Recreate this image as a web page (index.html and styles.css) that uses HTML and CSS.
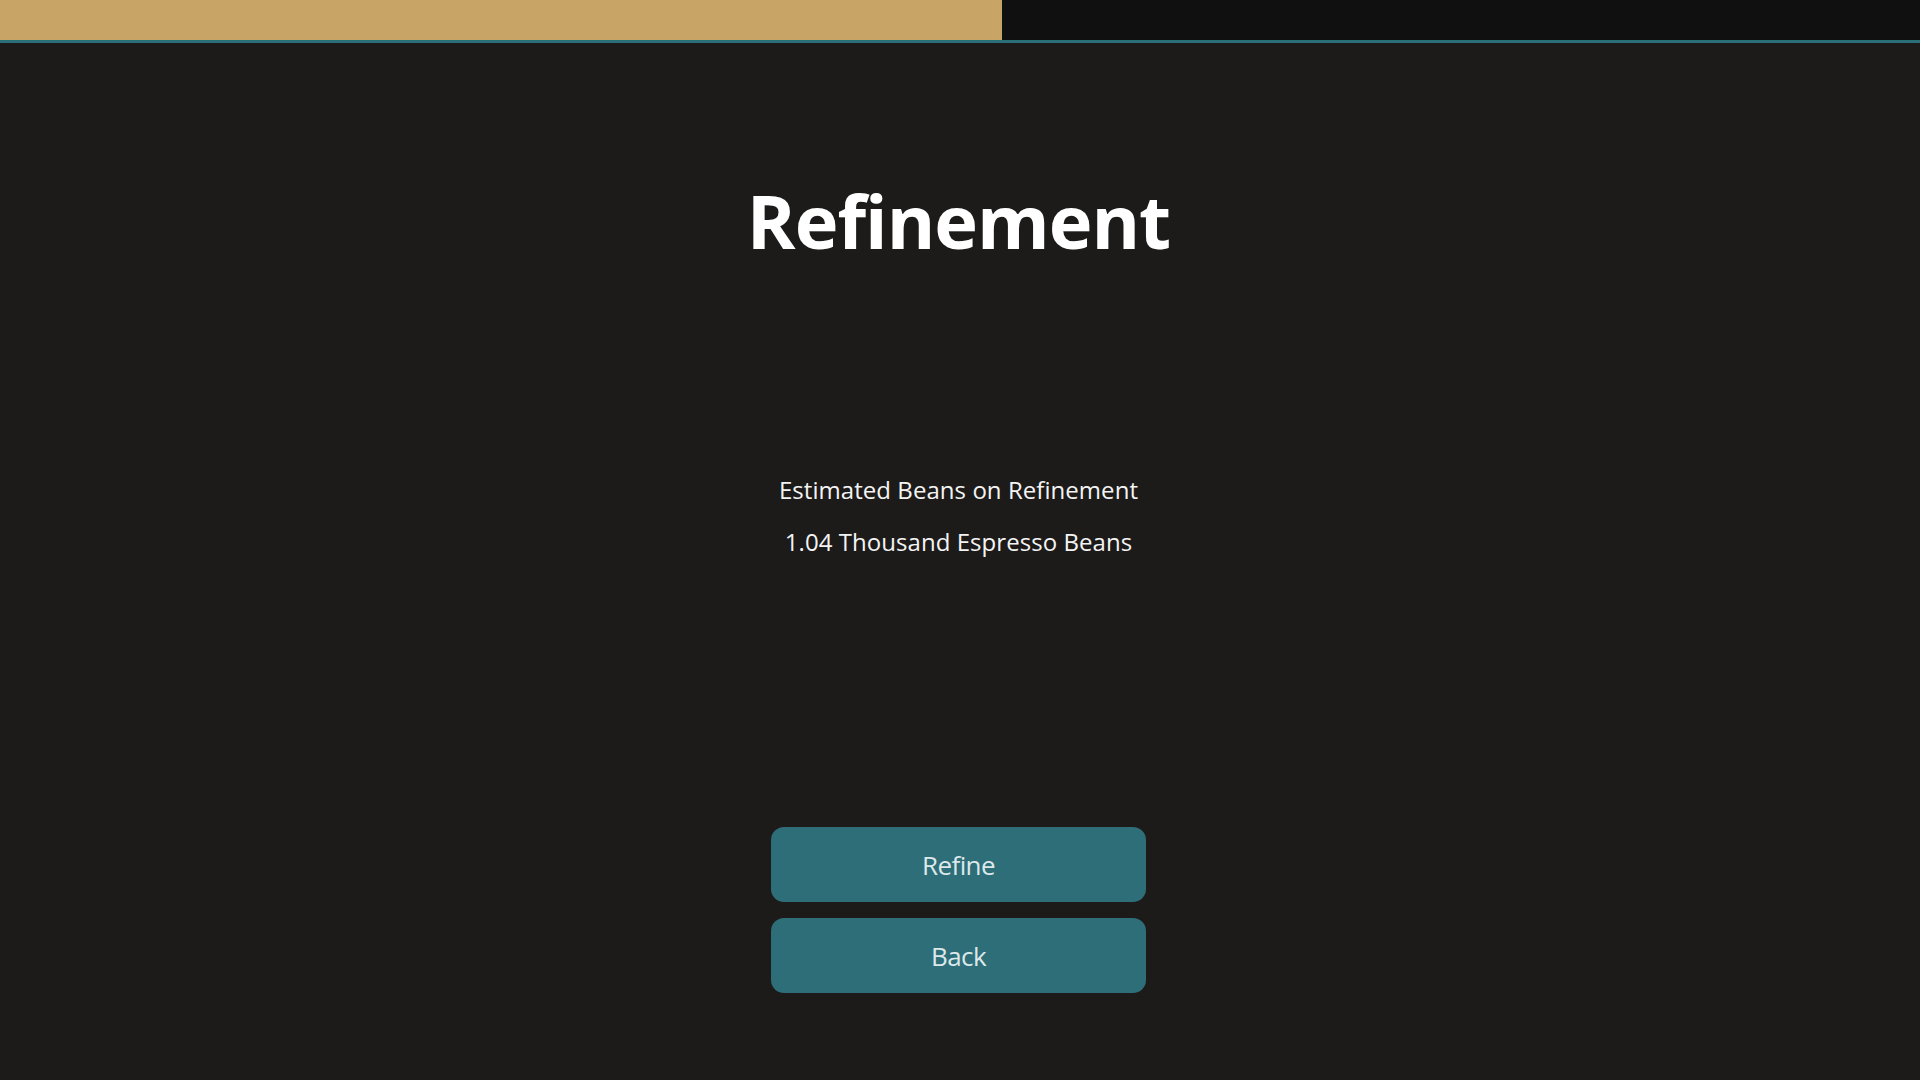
FILE: index.html
```html
<!DOCTYPE html>
<html lang="en">
<head>
<meta charset="utf-8">
<title>Refinement</title>
<link rel="stylesheet" href="styles.css">
</head>
<body>
<header class="topbar">
  <div class="progress" style="width: 52.3%"></div>
</header>
<main class="screen">
  <h1 class="title">Refinement</h1>
  <section class="estimate">
    <p class="line">Estimated Beans on Refinement</p>
    <p class="line">1.04 Thousand Espresso Beans</p>
  </section>
  <div class="actions">
    <button class="btn" type="button">Refine</button>
    <button class="btn" type="button">Back</button>
  </div>
</main>
</body>
</html>
```
FILE: styles.css
```css
html, body {
  margin: 0;
  padding: 0;
  height: 100%;
}
body {
  background: #1c1b1a;
  font-family: "Open Sans", "Noto Sans", sans-serif;
  color: #ffffff;
  overflow: hidden;
}
.topbar {
  height: 40px;
  background: #101010;
  border-bottom: 3px solid #2a6f78;
  display: flex;
}
.progress {
  height: 100%;
  background: #c8a466;
  border-right: 2px solid #0b1313;
  box-sizing: border-box;
}
.screen {
  display: flex;
  flex-direction: column;
  align-items: center;
  padding-right: 3px;
}
.title {
  margin: 141px 0 0;
  font-size: 74px;
  line-height: 1;
  font-weight: 700;
  letter-spacing: -1px;
  color: #ffffff;
}
.estimate {
  margin-top: 206px;
  display: flex;
  flex-direction: column;
  align-items: center;
}
.line {
  margin: 0;
  font-size: 24px;
  line-height: 52px;
  letter-spacing: 0.05px;
  color: #f4f4f4;
}
.actions {
  margin-top: 259px;
  display: flex;
  flex-direction: column;
  gap: 16px;
}
.btn {
  width: 375px;
  height: 75px;
  border: none;
  border-radius: 13px;
  background: #2e6e78;
  color: #dce8ea;
  font-family: "Open Sans", "Noto Sans", sans-serif;
  font-size: 26px;
  letter-spacing: -0.6px;
  padding: 0;
  cursor: pointer;
}
```
